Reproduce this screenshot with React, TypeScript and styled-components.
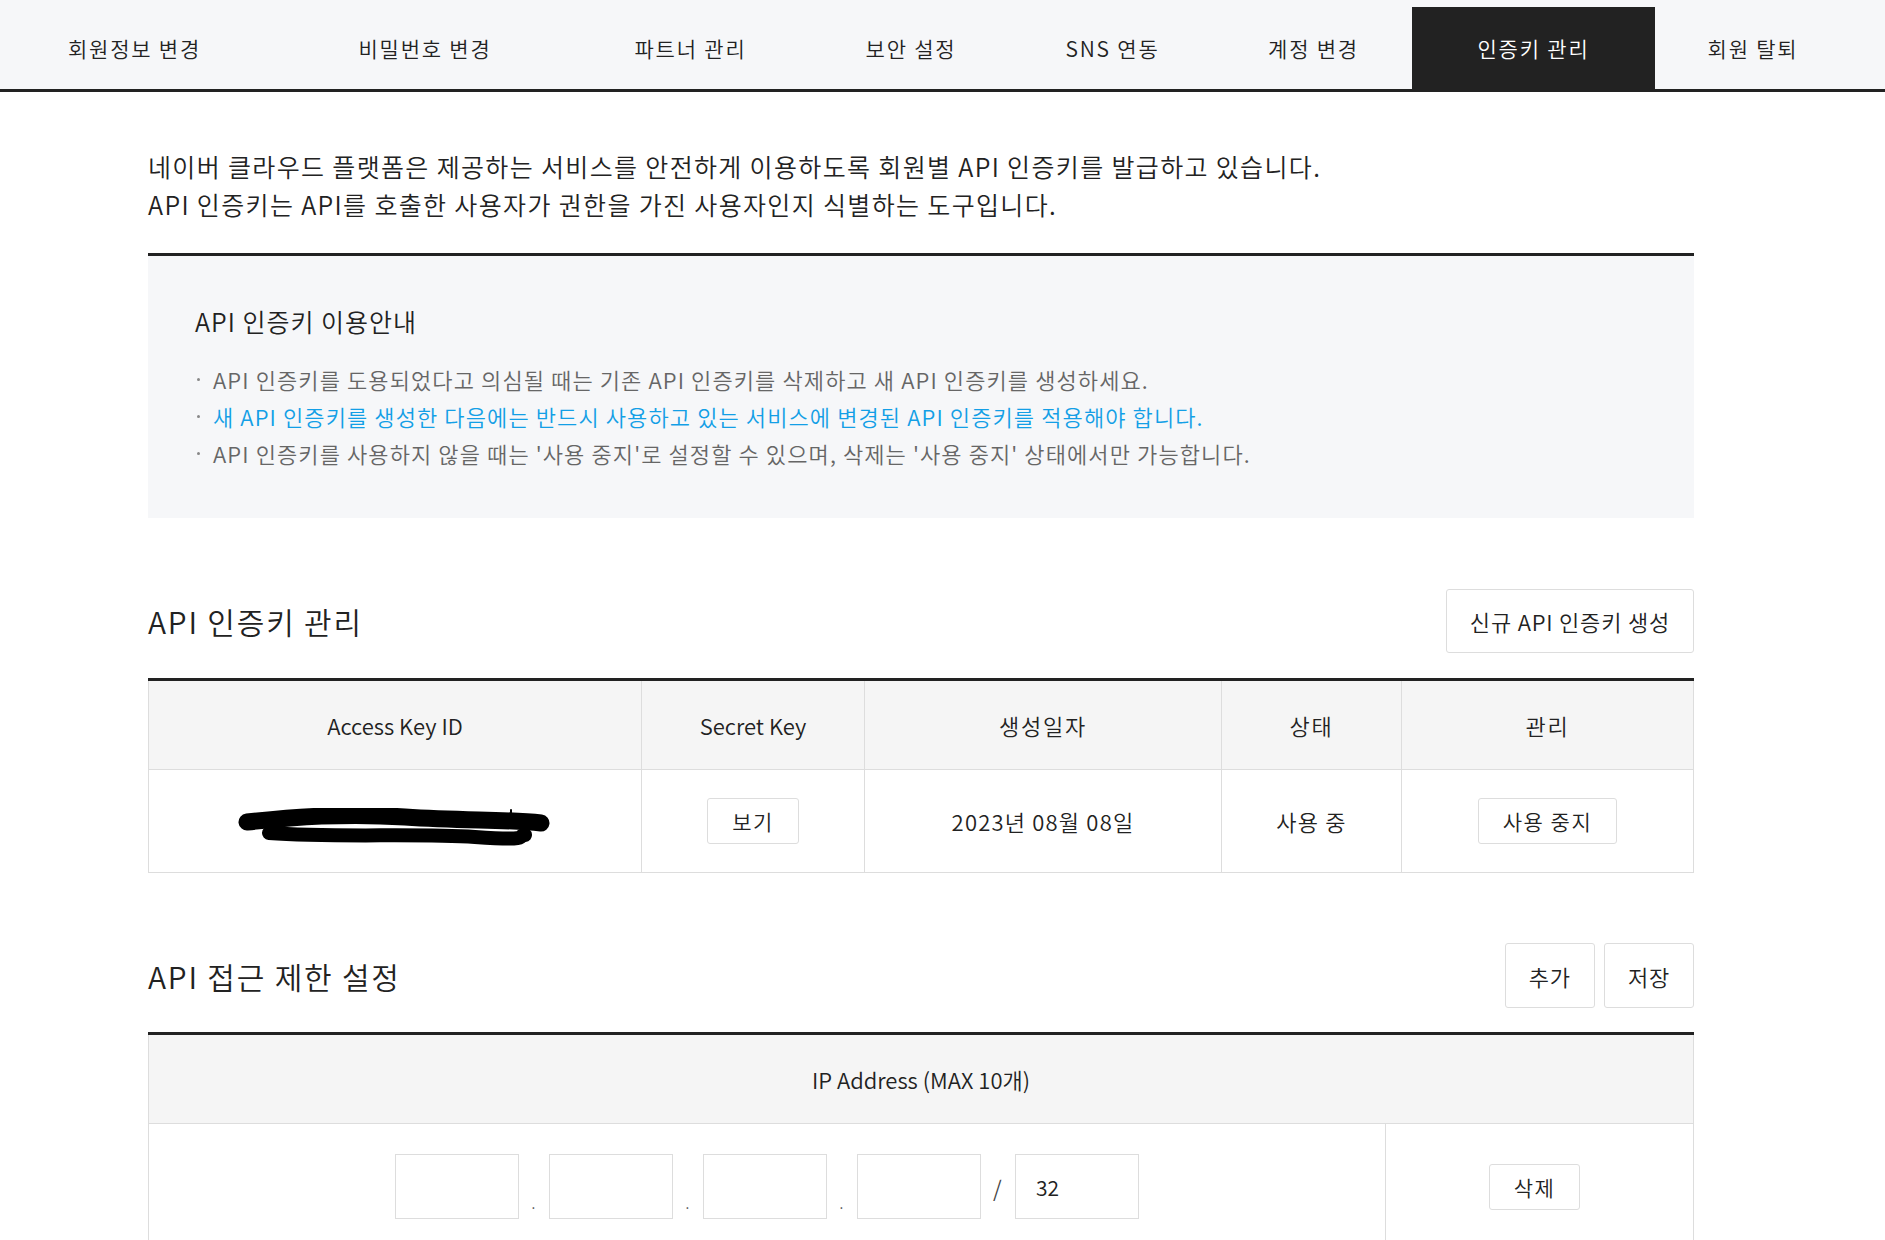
import React from 'react';
import styled, {createGlobalStyle} from 'styled-components';

const GlobalStyle = createGlobalStyle`
body {
  margin: 0;
  background: #fff;
  color: #222;
  font-family: "Noto Sans CJK KR", "Noto Sans", sans-serif;
  font-weight: 350;
}
* { box-sizing: border-box; }
`;

const TabBar = styled.nav`
height: 92px;
background-color: #f6f7f9;
border-bottom: 3px solid #222;
overflow: hidden;
`;

const TabList = styled.ul`
display: flex;
margin: 0 0 0 -12px;
padding: 0;
list-style: none;
`;

interface TabProps {
    readonly $w: number;
    readonly $active?: boolean;
}

const Tab = styled.li<TabProps>`
flex: none;
width: ${(p) => p.$w}px;
height: 82px;
margin-top: 7px;
display: flex;
align-items: center;
justify-content: center;
font-size: 21px;
letter-spacing: 1.8px;
color: ${(p) => p.$active ? '#fff' : '#222'};
background-color: ${(p) => p.$active ? '#222' : 'transparent'};
cursor: pointer;
`;

const Content = styled.main`
width: 1546px;
margin-left: 148px;
padding-top: 56px;
`;

const Intro = styled.p`
margin: 0;
font-size: 25px;
line-height: 37.5px;
letter-spacing: 1.35px;
`;

const InfoBox = styled.section`
margin-top: 30px;
border-top: 3px solid #222;
background-color: #f6f7f9;
padding: 47px 47px 46px;
`;

const InfoTitle = styled.h3`
margin: 0 0 21px;
font-size: 25px;
font-weight: inherit;
line-height: 37px;
letter-spacing: 1px;
`;

const BulletList = styled.ul`
margin: 0;
padding: 0;
list-style: none;
`;

const Bullet = styled.li<{ $blue?: boolean }>`
position: relative;
padding-left: 18px;
font-size: 22px;
line-height: 37px;
letter-spacing: 1.1px;
color: ${(p) => p.$blue ? '#139fe6' : '#666'};

&::before {
  content: '';
  position: absolute;
  left: 2px;
  top: 17px;
  width: 3px;
  height: 3px;
  border-radius: 50%;
  background-color: #888;
}
`;

const SectionHead = styled.div<{ $top: number }>`
margin-top: ${(p) => p.$top}px;
display: flex;
align-items: center;
justify-content: space-between;
`;

const SectionTitle = styled.h2`
margin: 0;
font-size: 30px;
font-weight: inherit;
letter-spacing: 1.8px;
`;

const ButtonGroup = styled.div`
display: flex;
gap: 9px;
`;

const OutlineButton = styled.button<{ $large?: boolean }>`
height: ${(p) => p.$large ? 65 : 46}px;
min-width: 90px;
padding: 0 ${(p) => p.$large ? 23 : 24}px;
background-color: #fff;
border: 1px solid #ddd;
border-radius: 3px;
font-family: inherit;
font-weight: inherit;
font-size: ${(p) => p.$large ? 22 : 21}px;
letter-spacing: ${(p) => p.$large ? 0.8 : 1.5}px;
color: #222;
cursor: pointer;
`;

const Table = styled.table<{ $top: number }>`
width: 100%;
margin-top: ${(p) => p.$top}px;
border-collapse: collapse;
table-layout: fixed;
border-top: 3px solid #222;
`;

const Th = styled.th<{ $latin?: boolean }>`
height: 90px;
padding: 0;
background-color: #f5f5f5;
border: 1px solid #ddd;
border-top: none;
font-size: 22px;
font-weight: inherit;
letter-spacing: ${(p) => p.$latin ? 0 : 1.8}px;
text-align: center;
`;

const Td = styled.td<{ $pad?: number }>`
height: 103px;
padding: ${(p) => p.$pad ?? 0}px 0;
border: 1px solid #ddd;
font-size: 22px;
letter-spacing: 1.2px;
text-align: center;
vertical-align: middle;
`;

const Redacted = styled.svg`
display: block;
margin: 14px auto 0;
`;

const IpGroup = styled.div`
display: flex;
justify-content: center;
`;

const IpInput = styled.input`
width: 124px;
height: 65px;
padding: 0 20px;
border: 1px solid #ddd;
border-radius: 0;
font-family: inherit;
font-weight: inherit;
font-size: 21px;
color: #222;
outline: none;
`;

const Sep = styled.span<{ $slash?: boolean }>`
width: ${(p) => p.$slash ? 34 : 30}px;
display: flex;
justify-content: center;
align-items: ${(p) => p.$slash ? 'center' : 'flex-end'};
padding-bottom: ${(p) => p.$slash ? 0 : 6}px;
font-size: ${(p) => p.$slash ? 22 : 14}px;
color: #444;
`;

const tabs = [
    {label: '회원정보 변경', w: 293},
    {label: '비밀번호 변경', w: 288},
    {label: '파트너 관리', w: 243},
    {label: '보안 설정', w: 198},
    {label: 'SNS 연동', w: 205},
    {label: '계정 변경', w: 197},
    {label: '인증키 관리', w: 243, active: true},
    {label: '회원 탈퇴', w: 196},
];

const App = () => {
    return (
        <>
            <GlobalStyle/>
            <TabBar>
                <TabList>
                    {tabs.map((t) => (
                        <Tab key={t.label} $w={t.w} $active={t.active}>{t.label}</Tab>
                    ))}
                </TabList>
            </TabBar>

            <Content>
                <Intro>
                    네이버 클라우드 플랫폼은 제공하는 서비스를 안전하게 이용하도록 회원별 API 인증키를 발급하고 있습니다.<br/>
                    API 인증키는 API를 호출한 사용자가 권한을 가진 사용자인지 식별하는 도구입니다.
                </Intro>

                <InfoBox>
                    <InfoTitle>API 인증키 이용안내</InfoTitle>
                    <BulletList>
                        <Bullet>API 인증키를 도용되었다고 의심될 때는 기존 API 인증키를 삭제하고 새 API 인증키를 생성하세요.</Bullet>
                        <Bullet $blue>새 API 인증키를 생성한 다음에는 반드시 사용하고 있는 서비스에 변경된 API 인증키를 적용해야 합니다.</Bullet>
                        <Bullet>API 인증키를 사용하지 않을 때는 '사용 중지'로 설정할 수 있으며, 삭제는 '사용 중지' 상태에서만 가능합니다.</Bullet>
                    </BulletList>
                </InfoBox>

                <SectionHead $top={71}>
                    <SectionTitle>API 인증키 관리</SectionTitle>
                    <OutlineButton $large style={{height: 64}}>신규 API 인증키 생성</OutlineButton>
                </SectionHead>

                <Table $top={25}>
                    <colgroup>
                        <col style={{width: 493}}/>
                        <col style={{width: 223}}/>
                        <col style={{width: 357}}/>
                        <col style={{width: 180}}/>
                        <col/>
                    </colgroup>
                    <thead>
                        <tr>
                            <Th $latin>Access Key ID</Th>
                            <Th $latin>Secret Key</Th>
                            <Th>생성일자</Th>
                            <Th>상태</Th>
                            <Th>관리</Th>
                        </tr>
                    </thead>
                    <tbody>
                        <tr>
                            <Td>
                                <Redacted width="320" height="40" viewBox="0 0 320 40">
                                    <path d="M12 14 C60 9 110 5 170 9 S 270 11 306 15" stroke="#000" strokeWidth="17" strokeLinecap="round" fill="none"/>
                                    <path d="M34 25 C100 30 180 25 240 29 S 280 28 290 27" stroke="#000" strokeWidth="14" strokeLinecap="round" fill="none"/>
                                    <path d="M276 2 L276 9" stroke="#000" strokeWidth="2" strokeLinecap="round"/>
                                </Redacted>
                            </Td>
                            <Td><OutlineButton>보기</OutlineButton></Td>
                            <Td>2023년 08월 08일</Td>
                            <Td>사용 중</Td>
                            <Td><OutlineButton>사용 중지</OutlineButton></Td>
                        </tr>
                    </tbody>
                </Table>

                <SectionHead $top={70}>
                    <SectionTitle>API 접근 제한 설정</SectionTitle>
                    <ButtonGroup>
                        <OutlineButton $large>추가</OutlineButton>
                        <OutlineButton $large>저장</OutlineButton>
                    </ButtonGroup>
                </SectionHead>

                <Table $top={24}>
                    <colgroup>
                        <col style={{width: 1237}}/>
                        <col/>
                    </colgroup>
                    <thead>
                        <tr>
                            <Th $latin colSpan={2}>IP Address (MAX 10개)</Th>
                        </tr>
                    </thead>
                    <tbody>
                        <tr>
                            <Td $pad={30}>
                                <IpGroup>
                                    <IpInput/>
                                    <Sep>.</Sep>
                                    <IpInput/>
                                    <Sep>.</Sep>
                                    <IpInput/>
                                    <Sep>.</Sep>
                                    <IpInput/>
                                    <Sep $slash>/</Sep>
                                    <IpInput defaultValue="32"/>
                                </IpGroup>
                            </Td>
                            <Td $pad={30} style={{paddingRight: 10}}><OutlineButton>삭제</OutlineButton></Td>
                        </tr>
                    </tbody>
                </Table>
            </Content>
        </>
    );
};

export default App;
